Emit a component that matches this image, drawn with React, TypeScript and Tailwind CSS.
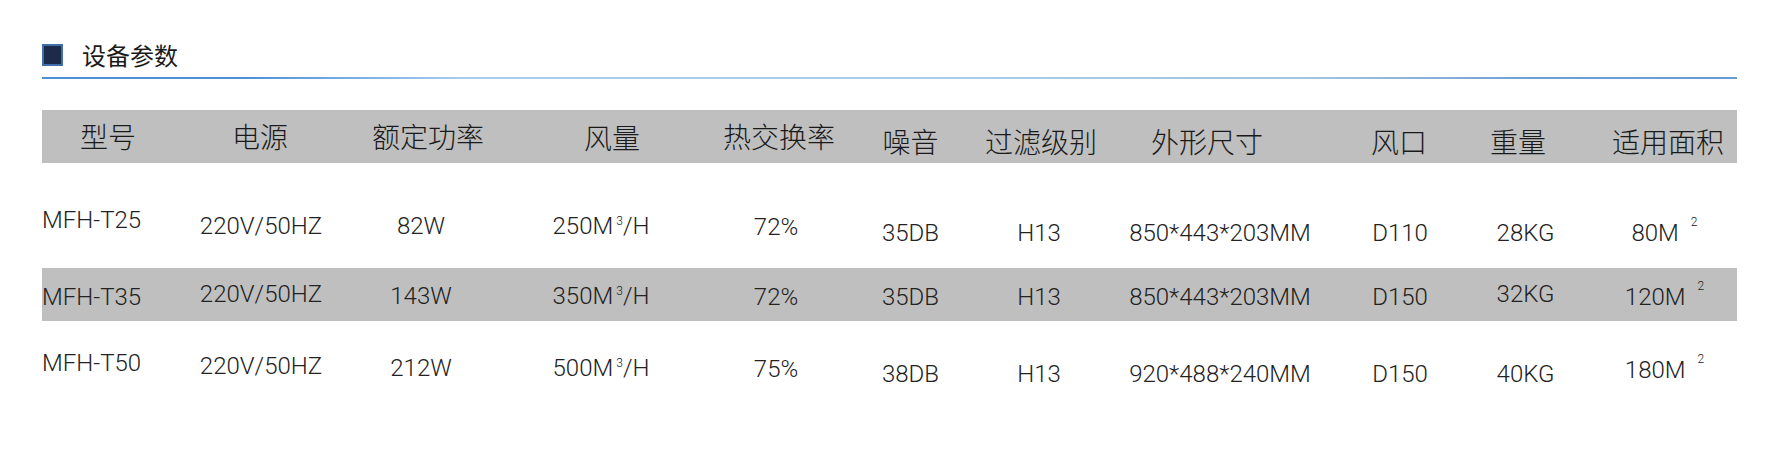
import type { ReactNode } from 'react';

const COLS = [
  { head: '型号', hcls: 'pr-[10px]', dcls: 'justify-start' },
  { head: '电源', hcls: 'pr-[8px]', dcls: 'justify-center pr-[6px]' },
  { head: '额定功率', hcls: 'pr-[8px]', dcls: 'justify-center pr-[22px]' },
  { head: '风量', hcls: 'pl-[8px]', dcls: 'justify-center pr-[14px]' },
  { head: '热交换率', hcls: 'pl-[17px]', dcls: 'justify-center pl-[11px]' },
  { head: '噪音', hcls: '', dcls: 'justify-center' },
  { head: '过滤级别', hcls: 'pr-[18px]', dcls: 'justify-center pr-[22px]' },
  { head: '外形尺寸', hcls: 'pr-[13px]', dcls: 'justify-center pl-[13px]' },
  { head: '风口', hcls: 'pl-[37px]', dcls: 'justify-center pl-[39px]' },
  { head: '重量', hcls: 'pr-[15px]', dcls: 'justify-center' },
  { head: '适用面积', hcls: 'pl-[7px]', dcls: 'justify-center' },
];

// header vertical nudge per column
const HEAD_PT = [
  'pt-[11px]', 'pt-[11px]', 'pt-[11px]', 'pt-[12px]', 'pt-[11px]',
  'pt-[16px]', 'pt-[16px]', 'pt-[16px]', 'pt-[16px]', 'pt-[16px]', 'pt-[16px]',
];

function Air({ v }: { v: string }) {
  return (
    <span className="whitespace-nowrap">
      {v}M
      <span className="ml-[3px] inline-block -translate-y-[9px] text-[12px] leading-none">3</span>
      <span>/H</span>
    </span>
  );
}

function Area({ v }: { v: string }) {
  return (
    <span className="whitespace-nowrap">
      {v}M
      <span className="ml-[12px] inline-block -translate-y-[15px] text-[12px] leading-none">2</span>
    </span>
  );
}

type Row = { bg: string; h: string; cells: ReactNode[]; pts: string[] };

const ROWS: Row[] = [
  {
    bg: '',
    h: 'h-[105px]',
    cells: ['MFH-T25', '220V/50HZ', '82W', <Air v="250" />, '72%', '35DB', 'H13', '850*443*203MM', 'D110', '28KG', <Area v="80" />],
    pts: ['pt-[42px]', 'pt-[48px]', 'pt-[48px]', 'pt-[48px]', 'pt-[49px]', 'pt-[55px]', 'pt-[55px]', 'pt-[55px]', 'pt-[55px]', 'pt-[55px]', 'pt-[55px]'],
  },
  {
    bg: 'bg-[#bfbfbf]',
    h: 'h-[53px]',
    cells: ['MFH-T35', '220V/50HZ', '143W', <Air v="350" />, '72%', '35DB', 'H13', '850*443*203MM', 'D150', '32KG', <Area v="120" />],
    pts: ['pt-[14px]', 'pt-[11px]', 'pt-[13px]', 'pt-[13px]', 'pt-[14px]', 'pt-[14px]', 'pt-[14px]', 'pt-[14px]', 'pt-[14px]', 'pt-[11px]', 'pt-[14px]'],
  },
  {
    bg: '',
    h: 'h-[90px]',
    cells: ['MFH-T50', '220V/50HZ', '212W', <Air v="500" />, '75%', '38DB', 'H13', '920*488*240MM', 'D150', '40KG', <Area v="180" />],
    pts: ['pt-[27px]', 'pt-[30px]', 'pt-[32px]', 'pt-[32px]', 'pt-[33px]', 'pt-[38px]', 'pt-[38px]', 'pt-[38px]', 'pt-[38px]', 'pt-[38px]', 'pt-[34px]'],
  },
];

const GRID = 'grid grid-cols-[142px_160px_176px_176px_149px_131px_148px_179px_155px_135px_143px]';

export default function App() {
  return (
    <div className="min-h-[454px] w-full bg-white px-[42px] text-[#1e1e1e] font-['Roboto','Noto_Sans_CJK_SC',sans-serif]">
      <div className="flex items-center gap-[19px] pt-[44px]">
        <div className="h-[22px] w-[21px] border-[2px] border-[#3f6fa8] bg-[#1d2a4a]" />
        <h3 className="font-['Noto_Sans_CJK_SC',sans-serif] text-[24px] leading-[22px] text-[#1a1a1a]">设备参数</h3>
      </div>
      <div className="mt-[11px] h-[2px] bg-[linear-gradient(to_right,#4a90d9_0%,#4a90d9_12%,#a9cdf0_25%,#abcbe8_55%,#a3c3df_75%,#6f9fd3_88%,#6a9ad0_100%)]" />

      <div className="mt-[31px]">
        <div className={`${GRID} h-[53px] bg-[#bfbfbf]`}>
          {COLS.map((c, i) => (
            <div
              key={c.head}
              className={`flex justify-center ${c.hcls} ${HEAD_PT[i]} font-['Noto_Sans_CJK_SC',sans-serif] text-[28px] font-light leading-[30px] text-[#1a1a1a]`}
            >
              {c.head}
            </div>
          ))}
        </div>

        {ROWS.map((r, ri) => (
          <div key={ri} className={`${GRID} ${r.h} ${r.bg}`}>
            {r.cells.map((cell, ci) => (
              <div
                key={ci}
                className={`flex whitespace-nowrap ${COLS[ci].dcls} ${r.pts[ci]} text-[24px] font-light leading-[30px] text-[#222]`}
              >
                {cell}
              </div>
            ))}
          </div>
        ))}
      </div>
    </div>
  );
}
